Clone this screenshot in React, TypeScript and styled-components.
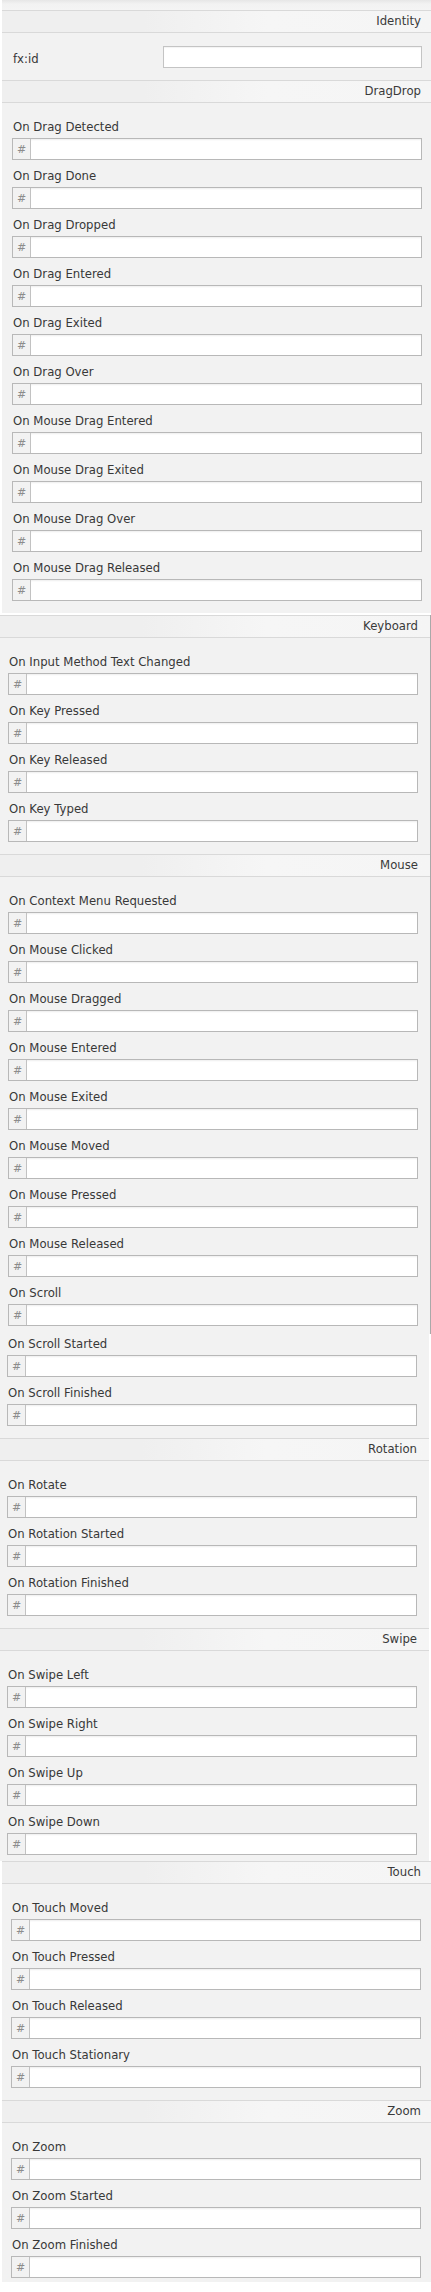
import React from "react";
import styled, { createGlobalStyle } from "styled-components";

const Global = createGlobalStyle`
  html, body { margin: 0; padding: 0; background: #ffffff; }
  body { font-family: "DejaVu Sans", "Liberation Sans", sans-serif; font-size: 12px; color: #383838; }
`;

const Page = styled.div`
  width: 431px;
  background: #ffffff;
`;

const Segment = styled.section<{ $ml: number; $w: number; $mt?: number; $pl: number; $pr: number; $hpr: number; $border?: boolean }>`
  --pl: ${(p) => p.$pl}px;
  --pr: ${(p) => p.$pr}px;
  --hpr: ${(p) => p.$hpr}px;
  margin: ${(p) => p.$mt ?? 0}px 0 0 ${(p) => p.$ml}px;
  width: ${(p) => p.$w}px;
  box-sizing: border-box;
  background: #f2f2f2;
  border-right: ${(p) => (p.$border ? "1px solid #a9a9a9" : "none")};
`;

const Toolbar = styled.div`
  height: 10px;
  background: linear-gradient(#e6e6e6, #f2f2f2 40%, #f4f4f4);
`;

const Header = styled.div`
  height: 23px;
  box-sizing: border-box;
  border-top: 1px solid #d9d9d9;
  border-bottom: 1px solid #d9d9d9;
  background: linear-gradient(to right, #efefef 0%, #efefef 33%, #f6f6f6 62%, #f5f5f5 100%);
  display: flex;
  align-items: center;
  justify-content: flex-end;
  padding-right: var(--hpr);
  font-size: 11.7px;
  color: #3a3a3a;
  line-height: 1;
`;

const FxRow = styled.div`
  height: 47px;
  display: grid;
  grid-template-columns: 150px 1fr;
  align-items: center;
  padding: 0 var(--pr) 0 calc(var(--pl) + 1px);
`;

const FxLabel = styled.div`
  margin-top: 5px;
  font-size: 11.7px;
  color: #383838;
`;

const TextBox = styled.input`
  height: 22px;
  box-sizing: border-box;
  margin: 0;
  border: 1px solid #c4c4c4;
  background: #ffffff;
  box-shadow: inset 0 1px 1px rgba(0, 0, 0, 0.05);
  outline: none;
  padding: 0 4px;
  width: 100%;
`;

const Body = styled.div<{ $pt: number; $pb: number }>`
  display: flex;
  flex-direction: column;
  gap: 8px;
  padding: ${(p) => p.$pt}px var(--pr) ${(p) => p.$pb}px var(--pl);
`;

const Item = styled.div`
  display: flex;
  flex-direction: column;
  gap: 2px;
`;

const Label = styled.div`
  height: 17px;
  line-height: 17px;
  padding-left: 1px;
  font-size: 11.7px;
  color: #383838;
  white-space: nowrap;
`;

const Field = styled.div`
  display: flex;
  height: 22px;
  box-sizing: border-box;
  border: 1px solid #b8b8b8;
  background: #ffffff;
`;

const Hash = styled.span`
  width: 17px;
  flex: none;
  display: flex;
  align-items: center;
  justify-content: center;
  background: #f2f2f2;
  border-right: 1px solid #c2c2c2;
  color: #8c8c8c;
  font-size: 11px;
`;

const Input = styled.input`
  flex: 1;
  min-width: 0;
  margin: 0;
  border: none;
  outline: none;
  padding: 0 4px;
  background: #ffffff;
  box-shadow: inset 0 2px 2px -1px rgba(0, 0, 0, 0.07);
`;

const Items = ({ names, pt, pb }: { names: string[]; pt: number; pb: number }) => (
  <Body $pt={pt} $pb={pb}>
    {names.map((n) => (
      <Item key={n}>
        <Label>{n}</Label>
        <Field>
          <Hash>#</Hash>
          <Input aria-label={n} />
        </Field>
      </Item>
    ))}
  </Body>
);

export default function App() {
  return (
    <Page>
      <Global />
      <Segment $ml={2} $w={429} $pl={10} $pr={9} $hpr={10}>
        <Toolbar />
        <Header>Identity</Header>
        <FxRow>
          <FxLabel>fx:id</FxLabel>
          <TextBox aria-label="fx:id" />
        </FxRow>
        <Header>DragDrop</Header>
        <Items
          pt={16}
          pb={12}
          names={[
            "On Drag Detected",
            "On Drag Done",
            "On Drag Dropped",
            "On Drag Entered",
            "On Drag Exited",
            "On Drag Over",
            "On Mouse Drag Entered",
            "On Mouse Drag Exited",
            "On Mouse Drag Over",
            "On Mouse Drag Released",
          ]}
        />
      </Segment>
      <Segment $ml={0} $w={431} $mt={2} $pl={8} $pr={12} $hpr={12} $border>
        <Header>Keyboard</Header>
        <Items
          pt={16}
          pb={12}
          names={["On Input Method Text Changed", "On Key Pressed", "On Key Released", "On Key Typed"]}
        />
        <Header>Mouse</Header>
        <Items
          pt={16}
          pb={8}
          names={[
            "On Context Menu Requested",
            "On Mouse Clicked",
            "On Mouse Dragged",
            "On Mouse Entered",
            "On Mouse Exited",
            "On Mouse Moved",
            "On Mouse Pressed",
            "On Mouse Released",
            "On Scroll",
          ]}
        />
      </Segment>
      <Segment $ml={0} $w={429} $pl={7} $pr={12} $hpr={12}>
        <Items pt={2} pb={12} names={["On Scroll Started", "On Scroll Finished"]} />
        <Header>Rotation</Header>
        <Items pt={16} pb={12} names={["On Rotate", "On Rotation Started", "On Rotation Finished"]} />
        <Header>Swipe</Header>
        <Items pt={16} pb={6} names={["On Swipe Left", "On Swipe Right", "On Swipe Up", "On Swipe Down"]} />
      </Segment>
      <Segment $ml={2} $w={429} $pl={9} $pr={10} $hpr={10}>
        <Header>Touch</Header>
        <Items
          pt={16}
          pb={12}
          names={["On Touch Moved", "On Touch Pressed", "On Touch Released", "On Touch Stationary"]}
        />
        <Header>Zoom</Header>
        <Items pt={16} pb={4} names={["On Zoom", "On Zoom Started", "On Zoom Finished"]} />
      </Segment>
    </Page>
  );
}
